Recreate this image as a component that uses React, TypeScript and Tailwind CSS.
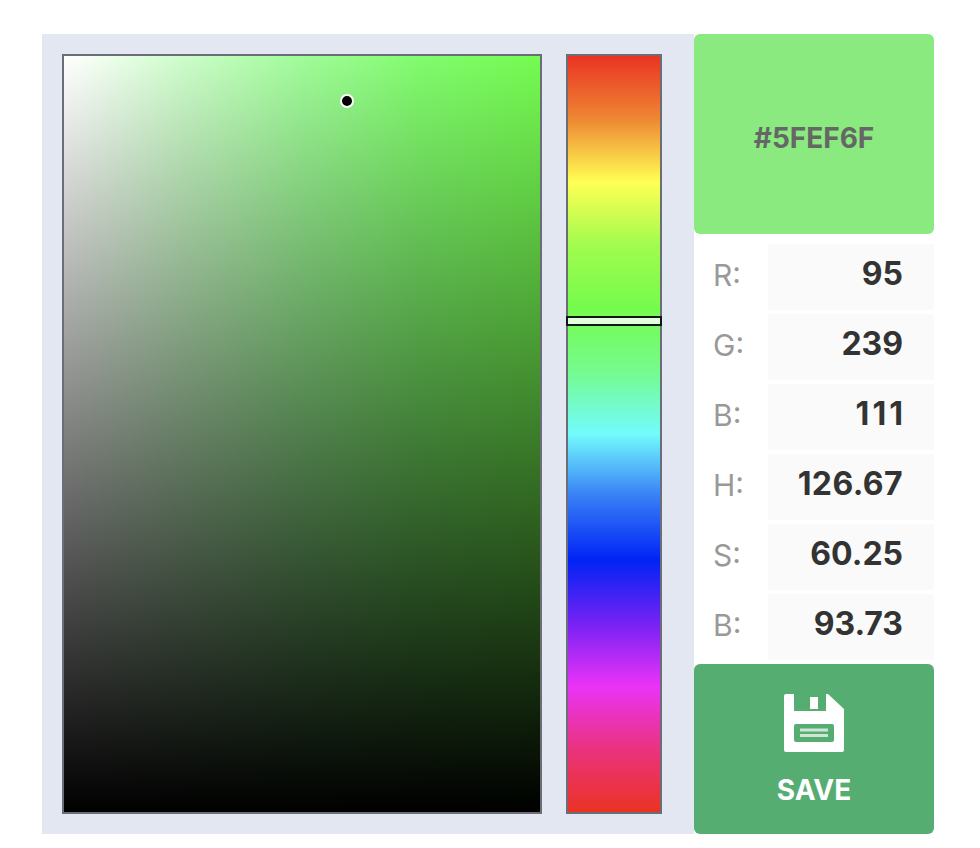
const channels = [
    { label: "R:", value: "95", valueClass: "pr-[31px]" },
    { label: "G:", value: "239", valueClass: "pr-[31px]" },
    { label: "B:", value: "111", valueClass: "pr-[28px] tracking-[3px]" },
    { label: "H:", value: "126.67", valueClass: "pr-[31px] tracking-[0.4px]" },
    { label: "S:", value: "60.25", valueClass: "pr-[31px]" },
    { label: "B:", value: "93.73", valueClass: "pr-[31px]" },
];

const SaveIcon = () => {
    return (
        <svg width="60" height="58" viewBox="0 0 60 58">
            <path
                fill="#ffffff"
                d="M2 0H10V17H42V0H44L60 15V56A2 2 0 0 1 58 58H2A2 2 0 0 1 0 56V2A2 2 0 0 1 2 0Z"
            />
            <rect x="26" y="3" width="8" height="12" fill="#ffffff" />
            <rect x="10" y="30" width="40" height="18" rx="2" fill="#56ad72" />
            <rect x="16" y="34.5" width="28" height="3" fill="#cfe6d7" />
            <rect x="16" y="40" width="28" height="3" fill="#cfe6d7" />
        </svg>
    );
};

const App = () => {
    return (
        <div className="w-[980px] h-[848px] bg-white pt-[34px] pl-[42px] font-['Inter',sans-serif] antialiased">
            <div className="flex w-[892px] h-[800px]">
                {/* Picker area */}
                <div className="flex w-[652px] h-[800px] gap-6 bg-[#e3e7f1] p-5">
                    <div className="relative w-[480px] h-[760px] border-2 border-[#6b6e76] bg-[linear-gradient(to_top,#000000,rgba(0,0,0,0)),linear-gradient(to_right,#ffffff,#cdfdca_25%,#a0fc99_50%,#81fc6d_75%,#75fb51)]">
                        <div className="absolute left-[276px] top-[38px] w-3.5 h-3.5 rounded-full bg-black border-2 border-white"></div>
                    </div>
                    <div className="relative w-24 h-[760px] border-2 border-[#6b6e76] bg-[linear-gradient(to_bottom,#ea3323,#ee8733_8.33%,#ffff54_16.67%,#a1fc4e_25%,#75fb4c_33.33%,#75fb8d_41.67%,#73fbfd_50%,#377ef5_58.33%,#0023f5_66.67%,#7522f4_75%,#ea33f7_83.33%,#ea337e_91.67%,#ea3323)]">
                        <div className="absolute -left-0.5 -right-0.5 top-[260px] h-2.5 border-2 border-[#111714] bg-[#e0ffda]"></div>
                    </div>
                </div>

                {/* Values column */}
                <div className="flex flex-col w-60">
                    <div className="flex items-center justify-center h-[200px] pt-2 rounded-md bg-[#8aea7f] text-[28px] font-bold text-[#666666]">
                        #5FEF6F
                    </div>
                    <div className="flex flex-col gap-1 mt-2.5">
                        {channels.map((c, i) => (
                            <div key={i} className="flex h-[66px]">
                                <div className="flex items-center w-[74px] pl-[19px] pb-1 text-[30px] text-[#999999]">{c.label}</div>
                                <div className={`flex items-center justify-end flex-1 pb-1.5 bg-[#fafafa] text-[32px] font-bold text-[#333333] ${c.valueClass}`}>{c.value}</div>
                            </div>
                        ))}
                    </div>
                    <div className="flex flex-col items-center mt-1 h-[170px] pt-[30px] rounded-md bg-[#56ad72]">
                        <SaveIcon />
                        <div className="mt-[22px] text-[28px] leading-8 font-bold text-white">SAVE</div>
                    </div>
                </div>
            </div>
        </div>
    );
};

export default App;
